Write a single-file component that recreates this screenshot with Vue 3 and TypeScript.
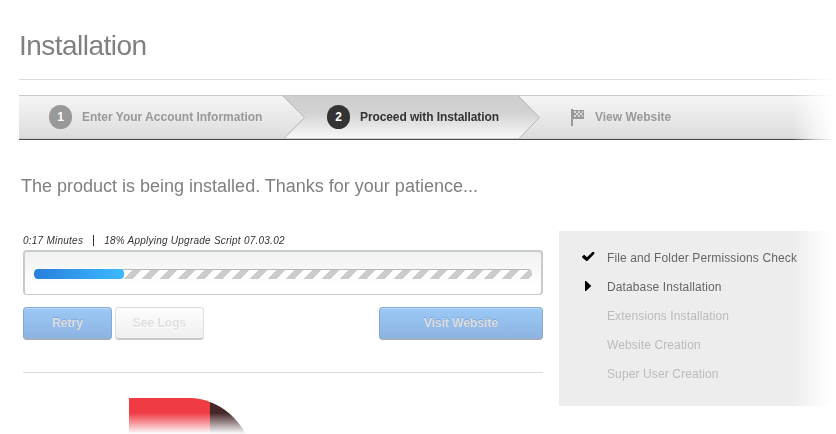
<script setup lang="ts">
interface Task {
  label: string
  state: 'done' | 'active' | 'pending'
}

const percent = 18
const tasks: Task[] = [
  { label: 'File and Folder Permissions Check', state: 'done' },
  { label: 'Database Installation', state: 'active' },
  { label: 'Extensions Installation', state: 'pending' },
  { label: 'Website Creation', state: 'pending' },
  { label: 'Super User Creation', state: 'pending' },
]
</script>

<template>
  <main class="page">
    <h1 class="title"><span>Installation</span></h1>
    <nav class="steps">
      <div class="step first">
        <span class="badge">1</span>
        <span class="lbl">Enter Your Account Information</span>
      </div>
      <div class="step current">
        <svg class="shape" width="258" height="45" viewBox="0 0 258 45">
          <defs>
            <linearGradient id="currentStep" x1="0" y1="0" x2="0" y2="1">
              <stop offset="0" stop-color="#cecece" />
              <stop offset="0.4" stop-color="#d2d2d2" />
              <stop offset="1" stop-color="#f9f9f9" />
            </linearGradient>
          </defs>
          <path d="M0 0H236L257.500 22.500L236.500 44H1.500L22.500 22.500Z" fill="url(#currentStep)" />
          <path d="M0.500 0.500L22.500 22.500L1.500 44M236 0.500L257.500 22.500L236.500 44" fill="none" stroke="#b4b4b4" />
          <path d="M0 0.500H236" stroke="#c4c4c4" />
          <path d="M2 43.500H237" stroke="#cfcfcf" />
        </svg>
        <span class="badge dark">2</span>
        <span class="lbl tight">Proceed with Installation</span>
      </div>
      <div class="step last">
        <svg class="flag" width="14" height="17" viewBox="0 0 14 17" shape-rendering="crispEdges">
          <path d="M0 0H2V17H0Z" fill="#999" />
          <path d="M2 1H13V10H2Z" fill="#999" />
          <path d="M3 2h2v2h-2zM7 2h2v2h-2zM11 2h1v2h-1zM5 4h2v2h-2zM9 4h2v2h-2zM3 6h2v2h-2zM7 6h2v2h-2zM11 6h1v2h-1z" fill="#dadada" />
        </svg>
        <span class="lbl">View Website</span>
      </div>
    </nav>
    <h2 class="subtitle"><span>The product is being installed. Thanks for your patience...</span></h2>
    <div class="content">
      <section class="left">
        <p class="status"><span>0:17 Minutes</span><i class="sep"></i><span>{{ percent }}% Applying Upgrade Script 07.03.02</span></p>
        <div class="box">
          <div class="track"><div class="fill" :style="{ width: percent + '%' }"></div></div>
        </div>
        <div class="buttons">
          <button class="btn blue">Retry</button>
          <button class="btn grey">See Logs</button>
          <button class="btn blue wide">Visit Website</button>
        </div>
        <svg class="logo" width="120" height="36" viewBox="0 0 120 36">
          <path d="M0 0H61Q71 0 81 4V36H0Z" fill="#ef3b44" />
          <path d="M81 4Q103 12 117 36H81Z" fill="#45272a" />
        </svg>
      </section>
      <ul class="tasks">
        <li v-for="task in tasks" :key="task.label" :class="task.state">
          <span class="mark">
            <svg v-if="task.state === 'done'" class="check" width="13" height="10" viewBox="0 0 13 10">
              <path d="M0.200 4.200L2.200 2.800L5 5.200L10.400 0H12.300V1.800L5.400 9H4.400L0.200 5.400Z" fill="#000" />
            </svg>
            <svg v-else-if="task.state === 'active'" class="arrow" width="7" height="10" viewBox="0 0 7 10">
              <path d="M0 0H1L6.300 5L1 10H0Z" fill="#000" />
            </svg>
          </span>
          <span>{{ task.label }}</span>
        </li>
      </ul>
    </div>
  </main>
</template>

<style>
body {
  background: #fff;
  overflow: hidden;
}
</style>

<style scoped>
.page {
  box-sizing: border-box;
  width: 836px;
  height: 434px;
  overflow: hidden;
  padding: 20px 0 0 19px;
  font-family: "Liberation Sans", Arial, sans-serif;
  font-size: 12px;
  -webkit-mask-image: linear-gradient(to right, #000 793px, rgba(0, 0, 0, 0.35) 815px, transparent 834px);
  mask-image: linear-gradient(to right, #000 793px, rgba(0, 0, 0, 0.35) 815px, transparent 834px);
}
.title {
  box-sizing: border-box;
  height: 60px;
  margin: 0 0 15px;
  padding-top: 10px;
  border-bottom: 1px solid #dcdcdc;
  color: #808080;
  font-size: 28px;
  font-weight: 400;
  letter-spacing: -0.53px;
  line-height: 32px;
}
.steps {
  box-sizing: border-box;
  display: flex;
  height: 45px;
  border-top: 1px solid #cbcbcb;
  border-bottom: 1px solid #4a4a4a;
  background: linear-gradient(#f5f5f5, #dcdcdc);
  box-shadow: inset 0 -1px #cfcfcf;
}
.step {
  display: flex;
  align-items: center;
  height: 42px;
  color: #999;
  font-weight: 700;
}
.first {
  width: 235px;
  padding-left: 30px;
}
.current {
  position: relative;
  width: 191px;
  padding-left: 43px;
  color: #333;
}
.shape {
  position: absolute;
  left: -2px;
  top: -1px;
}
.last {
  padding-left: 53px;
}
.badge {
  position: relative;
  width: 23px;
  height: 24px;
  margin-right: 10px;
  border-radius: 12px;
  background: #999;
  color: #fff;
  line-height: 24px;
  text-align: center;
}
.dark {
  background: #333;
}
.lbl {
  position: relative;
  white-space: nowrap;
}
.tight {
  letter-spacing: -0.1px;
}
.flag {
  margin-right: 10px;
}
.subtitle {
  margin: 36px 0 0 2px;
  height: 55px;
  color: #808080;
  font-size: 18px;
  font-weight: 400;
  line-height: 20px;
}
.content {
  display: flex;
  gap: 16px;
  padding-left: 4px;
}
.left {
  width: 520px;
}
.status {
  display: flex;
  align-items: center;
  height: 19px;
  margin: 0;
  color: #333;
  font-size: 10px;
  font-style: italic;
  letter-spacing: 0.24px;
}
.sep {
  width: 1px;
  height: 11px;
  margin: 0 10px;
  background: #333;
}
.box {
  box-sizing: border-box;
  height: 45px;
  padding: 17px 9px 0;
  border: 2px solid #c9cbcb;
  border-bottom-width: 1px;
  border-radius: 4px;
  background: linear-gradient(#eff1f0, #fff 80%);
}
.track {
  box-sizing: border-box;
  height: 10px;
  overflow: hidden;
  border-radius: 4px;
  background: linear-gradient(#b8b8b8, #b8b8b8) 0 0 / 100% 1px no-repeat,
    repeating-linear-gradient(135deg, #fff 0, #fff 6.364px, #ccc 6.364px, #ccc 12.728px);
}
.fill {
  height: 10px;
  border-radius: 4px;
  background: linear-gradient(90deg, #277fda, #3eb9ff);
}
.buttons {
  box-sizing: border-box;
  display: flex;
  gap: 3px;
  height: 78px;
  padding-top: 12px;
  border-bottom: 1px solid #dcdcdc;
}
.btn {
  box-sizing: border-box;
  width: 89px;
  height: 33px;
  padding: 0 0 1px;
  border: 1px solid #85a9d4;
  border-bottom: 2px solid #a0aebf;
  border-radius: 4px;
  background: linear-gradient(#9bc8f5, #8db4e3);
  box-shadow: inset 0 1px #b7d9fa;
  color: #dedede;
  font-family: inherit;
  font-size: 12px;
  font-weight: 700;
  text-shadow: 0 -1px rgba(90, 130, 175, 0.4);
}
.grey {
  border-color: #dedede;
  border-bottom-color: #c9c9c9;
  background: linear-gradient(#fdfdfd, #efefef);
  box-shadow: none;
  color: #dfdfdf;
  text-shadow: 0 1px #fff;
}
.wide {
  width: 164px;
  margin-left: auto;
}
.logo {
  display: block;
  margin: 25px 0 0 106px;
  -webkit-mask-image: linear-gradient(#000 15px, transparent 36px);
  mask-image: linear-gradient(#000 15px, transparent 36px);
}
.tasks {
  box-sizing: border-box;
  flex: 1;
  height: 175px;
  margin: 0;
  padding: 12px 0 0 21px;
  background: #ededed;
  list-style: none;
}
.tasks li {
  display: flex;
  align-items: center;
  height: 29px;
  color: #666;
  letter-spacing: 0.12px;
  white-space: nowrap;
}
.tasks .pending {
  color: #bbb;
}
.mark {
  display: flex;
  width: 25px;
  padding-left: 2px;
}
.check {
  margin-bottom: 2px;
}
.arrow {
  margin: 0 0 1px 3px;
}
</style>
